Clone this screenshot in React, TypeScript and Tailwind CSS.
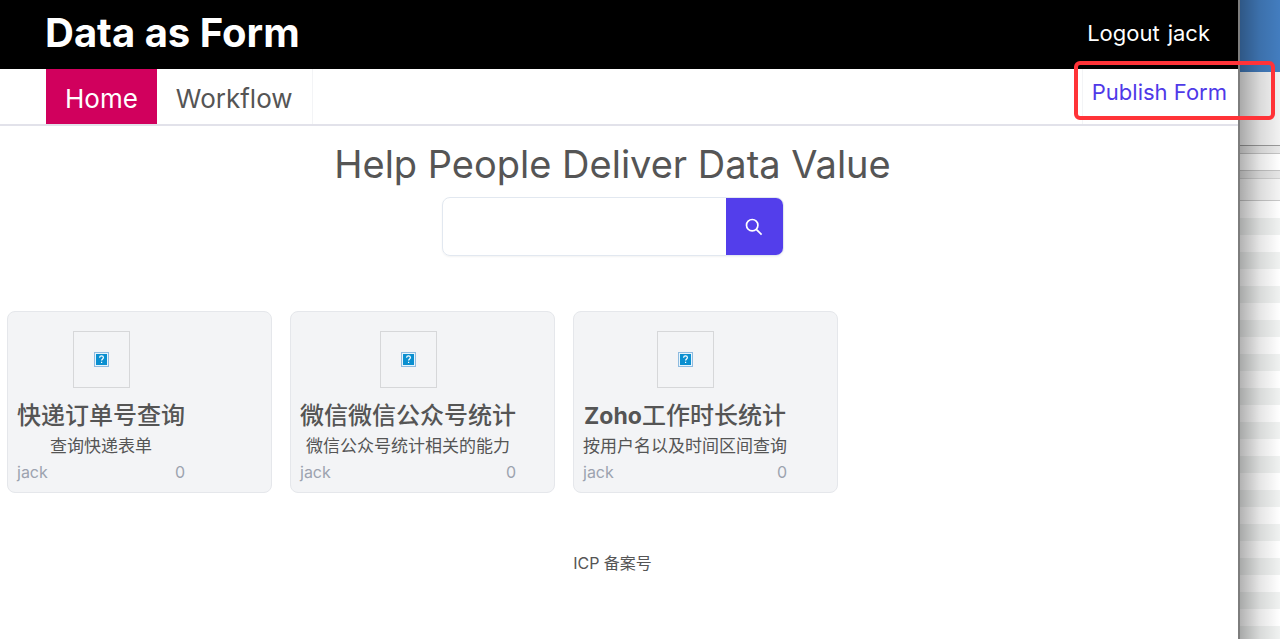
type FormCard = { title: string; description: string; owner: string; count: number };

const forms: FormCard[] = [
  { title: "快递订单号查询", description: "查询快递表单", owner: "jack", count: 0 },
  { title: "微信微信公众号统计", description: "微信公众号统计相关的能力", owner: "jack", count: 0 },
  { title: "Zoho工作时长统计", description: "按用户名以及时间区间查询", owner: "jack", count: 0 },
];

function MissingImage() {
  return (
    <div className="flex size-[57px] items-center justify-center border border-[#d6d7d9]">
      <svg width="15" height="15" viewBox="0 0 15 15" role="img" aria-label="Missing picture">
        <rect x="0.5" y="0.5" width="14" height="14" fill="#e6f4fc" stroke="#8fbbe0" />
        <rect x="2" y="2" width="11" height="11" fill="#0a8fd0" />
        <path
          d="M5.6 5.7C5.6 4.5 6.4 3.9 7.5 3.9S9.4 4.6 9.4 5.6C9.4 6.9 7.6 7 7.6 8.6M7.6 9.8V11"
          fill="none"
          stroke="#fff"
          strokeWidth="1.2"
        />
      </svg>
    </div>
  );
}

function Card({ form }: { form: FormCard }) {
  return (
    <article className="w-[265px] rounded-lg border border-[#e5e7eb] bg-[#f3f4f6] px-[9px] pt-[19px] pb-2">
      <div className="flex w-fit flex-col items-center">
        <MissingImage />
        <h2 className="mt-3 text-[24px] leading-8 font-medium whitespace-nowrap">
          {form.title.startsWith("Zoho") ? (
            <>
              <span className="text-[23px] font-bold">Zoho</span>
              {form.title.slice(4)}
            </>
          ) : (
            form.title
          )}
        </h2>
        <p className="text-[17px] leading-7 whitespace-nowrap">{form.description}</p>
        <div className="flex w-full justify-between text-[16px] leading-6 text-[#9ca3af]">
          <span>{form.owner}</span>
          <span>{form.count}</span>
        </div>
      </div>
    </article>
  );
}

function BackgroundWindow() {
  return (
    <aside
      aria-hidden="true"
      className="relative flex w-[42px] shrink-0 flex-col border-l-2 border-[#7d7d7d] bg-white"
    >
      <div className="h-[72px] bg-[#437dbf]" />
      <div className="h-[74px] border-b border-[#9a9a9a] bg-[#f2f2f2]" />
      <div className="h-2 border-b border-[#c4c4c4] bg-[#e8e8e8]" />
      <div className="h-[17px] border-b border-[#c4c4c4] bg-white" />
      <div className="h-2 border-b border-[#d0d0d0] bg-[#e6e6e6]" />
      <div className="h-[22px] border-b border-[#c8c8c8] bg-[#f4f4f4]" />
      <div className="grow bg-[repeating-linear-gradient(to_bottom,#ffffff_0px,#ffffff_17px,#f0f2f1_17px,#f0f2f1_34px)]" />
      <div className="absolute inset-0 bg-linear-to-r from-black/30 via-black/10 to-transparent" />
    </aside>
  );
}

export default function App() {
  return (
    <div className="flex min-h-screen overflow-x-clip bg-white font-['Inter','Noto_Sans_CJK_SC',sans-serif] text-[#555555]">
      <div className="min-w-0 grow">
        <header className="flex h-[69px] items-center justify-between bg-black pr-7 pl-[45px] text-white">
          <h1 className="pb-1 text-[40px] leading-[60px] font-bold">Data as Form</h1>
          <div className="flex gap-2 pb-1 text-[22px] leading-8">
            <a href="#logout">Logout</a>
            <a href="#jack">jack</a>
          </div>
        </header>
        <nav className="relative z-10 flex h-[57px] items-stretch border-b-2 border-[#e2e2ea] pl-[46px] text-[26px]">
          <a href="#home" className="flex items-center bg-[#d1005d] px-[19px] pt-1 text-white">
            Home
          </a>
          <a href="#workflow" className="flex items-center border-r border-[#f3f4f6] px-[19px] pt-1">
            Workflow
          </a>
          <a
            href="#publish"
            className="ml-auto flex items-center border-l border-[#f3f4f6] pr-[11px] pb-2 pl-[9px] text-[22px] text-[#4f39e8]"
          >
            Publish Form
          </a>
          <div className="pointer-events-none absolute -top-2 -right-[37px] h-[59px] w-[201px] rounded-[6px] border-4 border-[#ff3338]" />
        </nav>
        <main className="flex flex-col items-center pr-5 pl-[7px]">
          <h2 className="mt-3 text-[38px] leading-[52px] whitespace-nowrap">Help People Deliver Data Value</h2>
          <form
            role="search"
            className="mt-[7px] flex h-[59px] w-[342px] overflow-hidden rounded-lg border border-[#e2e8f0] shadow-xs"
          >
            <input type="search" aria-label="Search forms" className="min-w-0 grow px-3 text-xl outline-none" />
            <button
              type="button"
              aria-label="Search"
              className="flex w-[57px] shrink-0 items-center justify-center bg-[#533eeb] text-white"
            >
              <svg width="18" height="18" viewBox="0 0 18 18" fill="none" stroke="currentColor" strokeWidth="1.7">
                <circle cx="7.2" cy="7.2" r="5.7" />
                <path d="M11.3 11.3L16.6 16.6" />
              </svg>
            </button>
          </form>
          <section className="mt-[55px] flex w-full flex-wrap gap-[18px]">
            {forms.map((form) => (
              <Card key={form.title} form={form} />
            ))}
          </section>
        </main>
        <footer className="mt-14 pr-5 pl-[7px] text-center text-[16px] leading-7">ICP 备案号</footer>
      </div>
      <BackgroundWindow />
    </div>
  );
}
